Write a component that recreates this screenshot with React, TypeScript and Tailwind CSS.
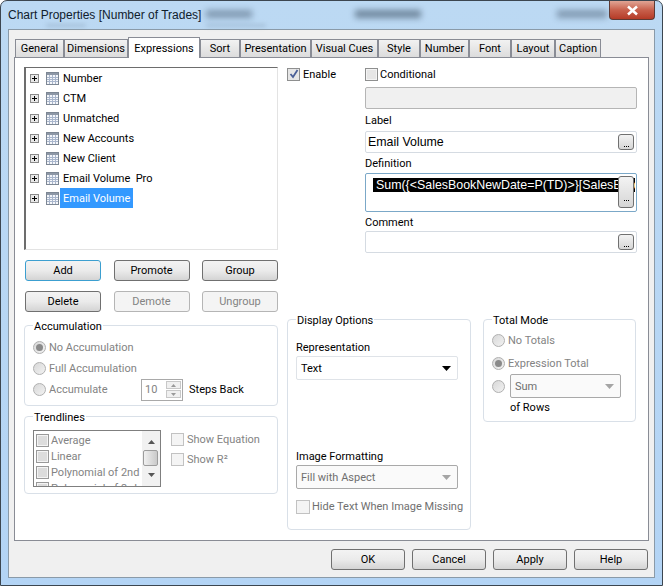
const tabs = [
  { label: 'General', w: 'w-[49px]' },
  { label: 'Dimensions', w: 'w-[64px]' },
  { label: 'Expressions', w: 'w-[72px]' },
  { label: 'Sort', w: 'w-[40px]' },
  { label: 'Presentation', w: 'w-[71px]' },
  { label: 'Visual Cues', w: 'w-[67px]' },
  { label: 'Style', w: 'w-[42px]' },
  { label: 'Number', w: 'w-[49px]' },
  { label: 'Font', w: 'w-[42px]' },
  { label: 'Layout', w: 'w-[44px]' },
  { label: 'Caption', w: 'w-[46px]' },
];

const treeItems = ['Number', 'CTM', 'Unmatched', 'New Accounts', 'New Client', 'Email Volume  Pro', 'Email Volume'];

function PlusBox() {
  return (
    <svg width="9" height="9" viewBox="0 0 9 9" className="shrink-0">
      <rect x="0.5" y="0.5" width="8" height="8" fill="#e8e8e8" stroke="#8a8a8a" />
      <path d="M2 4.5h5M4.5 2v5" stroke="#000" />
    </svg>
  );
}

function TableIcon() {
  return (
    <svg width="13" height="13" viewBox="0 0 13 13" className="shrink-0">
      <rect x="0.5" y="0.5" width="12" height="12" fill="#f4f6fa" stroke="#7d8794" />
      <rect x="1" y="1" width="11" height="2" fill="#8d97a6" />
      <path d="M1 5.5h11M1 7.5h11M1 9.5h11M3.5 3v9M6.5 3v9M9.5 3v9" stroke="#a9b6cc" />
    </svg>
  );
}

function Btn({ label, w, focus, disabled }: { label: string; w: string; focus?: boolean; disabled?: boolean }) {
  return (
    <div
      className={`${w} h-[21px] flex items-center justify-center rounded-[3px] border bg-gradient-to-b ${
        focus
          ? 'border-[#3c9fd0] from-[#f3f3f3] via-[#ebebeb] to-[#d4d4d4] text-black'
          : disabled
            ? 'border-[#b5b5b5] from-[#f4f4f4] to-[#f4f4f4] text-[#838383]'
            : 'border-[#707070] from-[#f3f3f3] via-[#ebebeb] to-[#d4d4d4] text-black'
      }`}
    >
      {label}
    </div>
  );
}

function Dots({ tall }: { tall?: boolean }) {
  return (
    <div className={`absolute right-[2px] top-[2px] w-[16px] rounded-[3px] border border-[#707070] bg-gradient-to-b from-[#f3f3f3] to-[#d6d6d6] flex items-end justify-center ${tall ? 'h-[32px] pb-[6px]' : 'h-[16px] pb-[2px]'}`}>
      <span className="flex gap-[1px]">
        <i className="block w-[1px] h-[1px] bg-black" />
        <i className="block w-[1px] h-[1px] bg-black" />
        <i className="block w-[1px] h-[1px] bg-black" />
      </span>
    </div>
  );
}

function Radio({ checked }: { checked?: boolean }) {
  return (
    <span className="w-[13px] h-[13px] shrink-0 rounded-full border border-[#b0b0b0] bg-gradient-to-br from-[#d8d8d8] to-[#f2f2f2] flex items-center justify-center">
      {checked && <i className="block w-[7px] h-[7px] rounded-full bg-[#8a8a8a]" />}
    </span>
  );
}

function Group({ title, className, children }: { title: string; className: string; children: React.ReactNode }) {
  return (
    <div className={`relative rounded-[4px] border border-[#d9e0e8] ${className}`}>
      <span className="absolute left-[8px] top-[-7px] bg-white px-[1px] leading-[15px] text-black">{title}</span>
      {children}
    </div>
  );
}

function SelectBox({ text, w, active }: { text: string; w: string; active?: boolean }) {
  return (
    <div className={`${w} h-[24px] rounded-[2px] border flex items-center justify-between pl-[4px] pr-[6px] ${active ? 'border-[#dfe3e8] text-black' : 'border-[#a9a9a9] bg-[#fafafa] text-[#6f6f6f]'}`}>
      <span>{text}</span>
      <svg width="9" height="5" viewBox="0 0 9 5">
        <path d="M0 0h9L4.5 5z" fill={active ? '#000' : '#a5a5a5'} />
      </svg>
    </div>
  );
}

export default function App() {
  return (
    <div
      className="relative w-[663px] h-[586px] overflow-hidden rounded-t-[7px] border border-[#3c4650] bg-gradient-to-b from-[#bcd9f3] to-[#b3d4f5] text-[11px] leading-[15px] text-black"
      style={{ fontFamily: 'Roboto, "Liberation Sans", Arial, sans-serif' }}
    >
      {/* blurred desktop behind the aero frame */}
      <div className="absolute left-[205px] top-[9px] w-[46px] h-[8px] bg-[#5a6f86] opacity-60 blur-[3px]" />
      <div className="absolute left-[354px] top-[9px] w-[66px] h-[8px] bg-[#4f6478] opacity-70 blur-[3px]" />
      <div className="absolute left-[556px] top-[9px] w-[50px] h-[8px] bg-[#5a6f86] opacity-60 blur-[3px]" />
      <div className="absolute left-[45px] top-[23px] w-[40px] h-[3px] bg-[#7f97ad] opacity-40 blur-[2px]" />
      <div className="absolute left-[205px] top-[23px] w-[60px] h-[3px] bg-[#7f97ad] opacity-40 blur-[2px]" />

      <div className="h-[28px] flex items-start justify-between pl-[7px]">
        <span className="relative mt-[7px] text-[12px] leading-[15px] text-[#10202c]" style={{ fontFamily: '"Liberation Sans", Arial, sans-serif' }}>
          Chart Properties [Number of Trades]
        </span>
        <div className="relative mr-[7px] w-[46px] h-[19px] rounded-b-[4px] border border-t-0 border-[#5d3a34] bg-gradient-to-b from-[#e0a595] via-[#c8604c] to-[#b53a26] flex items-center justify-center">
          <svg width="13" height="11" viewBox="0 0 13 11">
            <path d="M2 1.5l9 8M11 1.5l-9 8" stroke="#fff" strokeWidth="2.6" />
          </svg>
        </div>
      </div>

      {/* client area */}
      <div className="mx-[7px] h-[549px] border border-[#8a9aa8] bg-[#f0f0f0] flex flex-col">
        <div className="px-[5px] pt-[7px]">
          <div className="flex pl-[1px] h-[20px] items-end">
            {tabs.map(t =>
              t.label === 'Expressions' ? (
                <div key={t.label} className={`${t.w} relative z-10 h-[21px] -mb-[1px] bg-white border border-b-0 border-[#898c95] flex items-start justify-center pt-[3px]`}>
                  {t.label}
                </div>
              ) : (
                <div key={t.label} className={`${t.w} h-[18px] border border-b-0 border-[#898c95] bg-gradient-to-b from-[#f2f2f2] to-[#dcdcdc] flex items-center justify-center`}>
                  {t.label}
                </div>
              ),
            )}
          </div>

          <div className="h-[484px] w-[635px] bg-white border border-[#898c95] flex gap-[9px] pl-[9px] pt-[9px]">
            {/* left column */}
            <div className="w-[254px] flex flex-col">
              <div className="h-[183px] border-t border-l-2 border-[#6d6d6d] border-r border-b border-r-[#e3e3e3] border-b-[#e3e3e3]">
                {treeItems.map((item, i) => (
                  <div key={item} className="h-[20px] flex items-center pl-[4px]">
                    <PlusBox />
                    <span className="w-[7px]" />
                    <TableIcon />
                    <span className={`ml-[1px] h-[20px] flex items-center px-[3px] whitespace-pre ${i === 6 ? 'bg-[#3399ff] text-white' : ''}`}>{item}</span>
                  </div>
                ))}
              </div>

              <div className="mt-[10px] flex justify-between pl-[1px]">
                <Btn label="Add" w="w-[76px]" focus />
                <Btn label="Promote" w="w-[76px]" />
                <Btn label="Group" w="w-[76px]" />
              </div>
              <div className="mt-[10px] flex justify-between pl-[1px]">
                <Btn label="Delete" w="w-[76px]" />
                <Btn label="Demote" w="w-[76px]" disabled />
                <Btn label="Ungroup" w="w-[76px]" disabled />
              </div>

              <Group title="Accumulation" className="mt-[13px] h-[81px] pl-[8px] pt-[11px] text-[#838383]">
                <div className="h-[21px] flex items-center gap-[3px]"><Radio checked /><span>No Accumulation</span></div>
                <div className="h-[21px] flex items-center gap-[3px]"><Radio /><span>Full Accumulation</span></div>
                <div className="h-[21px] flex items-center gap-[3px]">
                  <Radio />
                  <span className="w-[89px]">Accumulate</span>
                  <div className="w-[42px] h-[22px] border border-[#a9a9a9] flex items-center justify-between pl-[3px] pr-[1px]">
                    <span>10</span>
                    <span className="flex flex-col gap-[1px]">
                      <span className="w-[15px] h-[8px] border border-[#c8c8c8] bg-[#f0f0f0] flex items-center justify-center">
                        <svg width="5" height="3" viewBox="0 0 5 3"><path d="M0 3h5L2.5 0z" fill="#999" /></svg>
                      </span>
                      <span className="w-[15px] h-[8px] border border-[#c8c8c8] bg-[#f0f0f0] flex items-center justify-center">
                        <svg width="5" height="3" viewBox="0 0 5 3"><path d="M0 0h5L2.5 3z" fill="#999" /></svg>
                      </span>
                    </span>
                  </div>
                  <span className="ml-[3px] text-black">Steps Back</span>
                </div>
              </Group>

              <Group title="Trendlines" className="mt-[10px] h-[78px] flex pl-[8px] pt-[13px] text-[#838383]">
                <div className="relative w-[128px] h-[57px] border border-[#7f7f7f] overflow-hidden">
                  <div className="pl-[2px] pt-[1px]">
                    {['Average', 'Linear', 'Polynomial of 2nd degree', 'Polynomial of 3rd degree'].map(item => (
                      <div key={item} className="h-[16px] flex items-center gap-[2px] whitespace-nowrap">
                        <span className="w-[13px] h-[13px] shrink-0 border border-[#999] bg-[#dcdcdc] outline outline-1 -outline-offset-2 outline-[#f4f4f4]" />
                        <span>{item}</span>
                      </div>
                    ))}
                  </div>
                  <div className="absolute right-0 top-0 bottom-0 w-[18px] bg-[#f1f1f1] flex flex-col items-center justify-between py-[9px]">
                    <svg width="7" height="4" viewBox="0 0 7 4"><path d="M0 4h7L3.5 0z" fill="#555" /></svg>
                    <svg width="7" height="4" viewBox="0 0 7 4"><path d="M0 0h7L3.5 4z" fill="#555" /></svg>
                    <div className="absolute left-[1px] top-[19px] w-[15px] h-[16px] rounded-[2px] border border-[#9c9c9c] bg-gradient-to-r from-[#f0f0f0] to-[#c9c9c9]" />
                  </div>
                </div>
                <div className="ml-[10px] flex flex-col gap-[6px] pt-[2px]">
                  <div className="h-[14px] flex items-center gap-[3px]"><span className="w-[13px] h-[13px] border border-[#c2c2c2] bg-[#f4f4f4]" /><span>Show Equation</span></div>
                  <div className="h-[14px] flex items-center gap-[3px]"><span className="w-[13px] h-[13px] border border-[#c2c2c2] bg-[#f4f4f4]" /><span>Show R²</span></div>
                </div>
              </Group>
            </div>

            {/* right column */}
            <div className="w-[350px] flex flex-col">
              <div className="flex h-[14px] items-center">
                <span className="w-[13px] h-[13px] border border-[#8e8f8f] bg-[#e6e6e6] flex items-center justify-center">
                  <svg width="10" height="10" viewBox="0 0 10 10"><path d="M1.5 5l2.5 3 4.5-7" fill="none" stroke="#4a5f97" strokeWidth="1.8" /></svg>
                </span>
                <span className="ml-[3px] w-[62px]">Enable</span>
                <span className="w-[13px] h-[13px] border border-[#8e8f8f] bg-[#e6e6e6] outline outline-1 -outline-offset-2 outline-[#f4f4f4]" />
                <span className="ml-[2px]">Conditional</span>
              </div>

              <div className="ml-[78px] w-[272px] flex flex-col">
                <div className="mt-[6px] h-[22px] rounded-[2px] border border-[#b5b5b5] bg-[#f0f0f0]" />
                <div className="mt-[2px] h-[18px] flex items-center">Label</div>
                <div
                  className="relative mt-[2px] h-[22px] rounded-[2px] border border-[#d5dbe2] pl-[2px] flex items-center text-[12.4px]"
                  style={{ fontFamily: '"Liberation Sans", Arial, sans-serif' }}
                >
                  Email Volume
                  <Dots />
                </div>
                <div className="mt-[1px] h-[18px] flex items-center">Definition</div>
                <div className="relative mt-[1px] h-[39px] rounded-[2px] border border-[#7ba8c8] pl-[7px] pt-[4px] overflow-hidden">
                  <div
                    className="bg-black text-white h-[14px] w-[262px] pl-[3px] overflow-hidden whitespace-nowrap text-[12.4px] leading-[14px]"
                    style={{ fontFamily: '"Liberation Sans", Arial, sans-serif' }}
                  >
                    {'Sum({<SalesBookNewDate=P(TD)>}[SalesBookAmount])'}
                  </div>
                  <Dots tall />
                </div>
                <div className="mt-[1px] h-[18px] flex items-center">Comment</div>
                <div className="relative h-[22px] rounded-[2px] border border-[#d5dbe2]">
                  <Dots />
                </div>
              </div>

              <div className="mt-[66px] flex gap-[12px] items-start">
                <Group title="Display Options" className="w-[184px] h-[211px] px-[8px] pt-[20px]">
                  <div>Representation</div>
                  <div className="mt-[1px]"><SelectBox text="Text" w="w-[162px]" active /></div>
                  <div className="mt-[69px]">Image Formatting</div>
                  <div className="mt-[1px]"><SelectBox text="Fill with Aspect" w="w-[162px]" /></div>
                  <div className="mt-[10px] flex items-center gap-[2px] text-[#6f6f6f] whitespace-nowrap">
                    <span className="w-[14px] h-[14px] shrink-0 border border-[#c2c2c2] bg-[#f4f4f4]" />
                    <span>Hide Text When Image Missing</span>
                  </div>
                </Group>
                <Group title="Total Mode" className="w-[153px] h-[103px] pl-[8px] pt-[13px] text-[#838383]">
                  <div className="h-[14px] flex items-center gap-[3px]"><Radio /><span>No Totals</span></div>
                  <div className="mt-[9px] h-[14px] flex items-center gap-[3px]"><Radio checked /><span>Expression Total</span></div>
                  <div className="mt-[4px] flex items-center gap-[5px]">
                    <Radio />
                    <SelectBox text="Sum" w="w-[111px]" />
                  </div>
                  <div className="mt-[2px] pl-[18px] text-black">of Rows</div>
                </Group>
              </div>
            </div>
          </div>
        </div>

        <div className="flex justify-end gap-[7px] pr-[6px] pt-[8px]">
          <Btn label="OK" w="w-[74px]" />
          <Btn label="Cancel" w="w-[74px]" />
          <Btn label="Apply" w="w-[74px]" />
          <Btn label="Help" w="w-[74px]" />
        </div>
      </div>
    </div>
  );
}
